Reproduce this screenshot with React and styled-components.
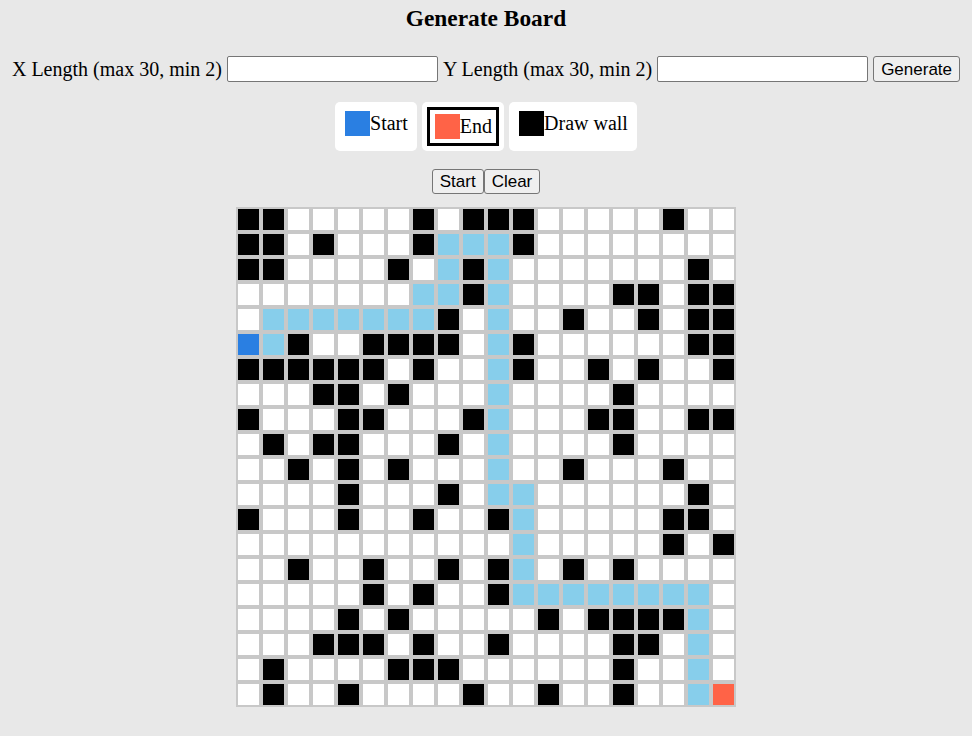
import React, { useState } from "react";
import styled, { createGlobalStyle } from "styled-components";

const GlobalStyle = createGlobalStyle`
    body{
        margin:0;
        background-color:#e8e8e8;
        font-family:"Liberation Serif", "Times New Roman", serif;
        font-size:20px;
        color:#000;
    }
`

const board = [
    "BBWWWWWBWBBBWWWWWBWW",
    "BBWBWWWBLLLBWWWWWWWW",
    "BBWWWWBWLBLWWWWWWWBW",
    "WWWWWWWLLBLWWWWBBWBB",
    "WLLLLLLLBWLWWBWWBWBB",
    "SLBWWBBBBWLBWWWWWWBB",
    "BBBBBBWBWWLBWWBWBWWB",
    "WWWBBWBWWWLWWWWBWWWW",
    "BWWWBBWWWBLWWWBBWWBB",
    "WBWBBWWWBWLWWWWBWWWW",
    "WWBWBWBWWWLWWBWWWBWW",
    "WWWWBWWWBWLLWWWWWWBW",
    "BWWWBWWBWWBLWWWWWBBW",
    "WWWWWWWWWWWLWWWWWBWB",
    "WWBWWBWWBWBLWBWBWWWW",
    "WWWWWBWBWWBLLLLLLLLW",
    "WWWWBWBWWWWWBWBBBBLW",
    "WWWBBBWBWWBWWWWBBWLW",
    "WBWWWWBBBWWWWWWBWWLW",
    "WBWWBWWWWBWWBWWBWWLE",
]

const colors = {
    W: "#ffffff",
    B: "#000000",
    L: "#87ceeb",
    S: "#2a7fe2",
    E: "#ff6347",
}

const Page = styled.div`
    display:flex;
    flex-direction:column;
    align-items:center;
`

const Title = styled.h3`
    font-size:23.4px;
    font-weight:bold;
    margin:5px 0 0;
`

const SizeRow = styled.div`
    display:flex;
    align-items:center;
    gap:5px;
    margin-top:24px;
`

const Label = styled.span`
    white-space:nowrap;
`

const Input = styled.input`
    box-sizing:border-box;
    width:211px;
    height:26px;
    border:1px solid #767676;
    border-radius:2px;
    background:#fff;
    padding:1px 2px;
    font-size:16px;
`

const Button = styled.button`
    font-family:"Liberation Sans", Arial, sans-serif;
    font-size:17px;
    color:#000;
    background-color:#efefef;
    border:1px solid #767676;
    border-radius:3px;
    padding:2px 7px;
    margin:0;
    height:${({$tall})=> $tall ? "26px" : "25px"};
    line-height:1;
    cursor:pointer;
`

const Legend = styled.div`
    display:flex;
    gap:5px;
    margin-top:20px;
`

const Card = styled.div`
    background-color:#fff;
    border-radius:5px;
    padding:5px;
    display:flex;
`

const Item = styled.div`
    display:flex;
    align-items:center;
    align-self:flex-start;
    padding:4px 4px 4px 5px;
    border:${({$active})=> $active ? "3px solid #000" : "none"};
    cursor:pointer;
`

const Swatch = styled.div`
    width:25px;
    height:25px;
    background-color:${({$color})=> $color};
`

const Controls = styled.div`
    display:flex;
    margin-top:18px;
`

const Grid = styled.div`
    display:grid;
    grid-template-columns:repeat(20, 25px);
    margin-top:13px;
`

const Cell = styled.div`
    box-sizing:border-box;
    width:25px;
    height:25px;
    border:2px solid #c8c8c8;
    background-color:${({$type})=> colors[$type]};
`

const legendItems = [
    {id:"start", title:"Start", color:colors.S},
    {id:"end", title:"End", color:colors.E},
    {id:"wall", title:"Draw wall", color:colors.B},
]

const App = ()=>{
    const [mode,setMode] = useState("end");

    return(
        <Page>
            <GlobalStyle/>
            <Title>Generate Board</Title>
            <SizeRow>
                <Label>X Length (max 30, min 2)</Label>
                <Input type="text"/>
                <Label>Y Length (max 30, min 2)</Label>
                <Input type="text"/>
                <Button $tall>Generate</Button>
            </SizeRow>
            <Legend>
                {
                    legendItems.map((item)=>{
                        return(
                            <Card key={item.id}>
                                <Item $active={mode === item.id} onClick={()=>setMode(item.id)}>
                                    <Swatch $color={item.color}/>
                                    {item.title}
                                </Item>
                            </Card>
                        )
                    })
                }
            </Legend>
            <Controls>
                <Button>Start</Button>
                <Button>Clear</Button>
            </Controls>
            <Grid>
                {
                    board.map((row,r)=>
                        row.split("").map((type,c)=>(
                            <Cell key={r + "-" + c} $type={type}/>
                        ))
                    )
                }
            </Grid>
        </Page>
    )
}

export default App;
